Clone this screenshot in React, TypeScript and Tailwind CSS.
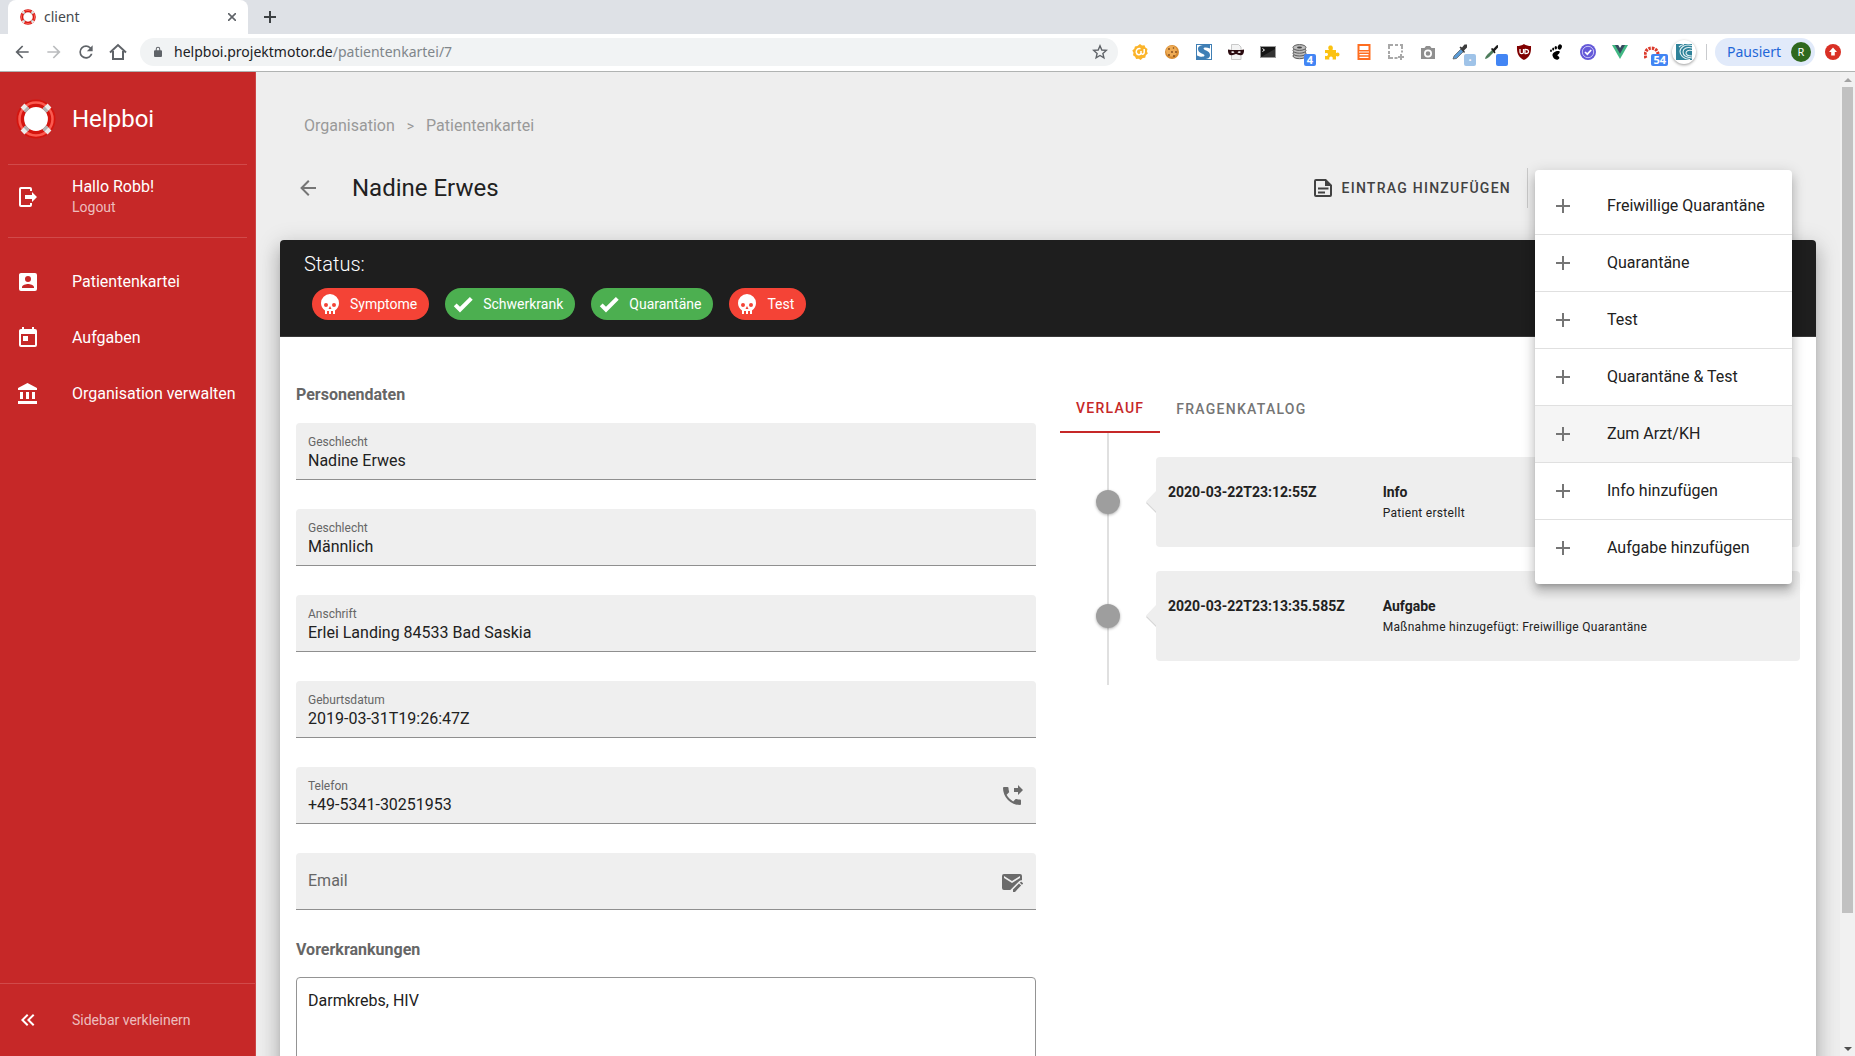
import type { ReactNode } from 'react';

const icons = {
  logout:
    'M16,17V14H9V10H16V7L21,12L16,17M14,2A2,2 0 0,1 16,4V6H14V4H5V20H14V18H16V20A2,2 0 0,1 14,22H5A2,2 0 0,1 3,20V4A2,2 0 0,1 5,2H14Z',
  accountBox:
    'M6,17C6,15 10,13.9 12,13.9C14,13.9 18,15 18,17V18H6M15,9A3,3 0 0,1 12,12A3,3 0 0,1 9,9A3,3 0 0,1 12,6A3,3 0 0,1 15,9M3,5V19A2,2 0 0,0 5,21H19A2,2 0 0,0 21,19V5A2,2 0 0,0 19,3H5C3.89,3 3,3.9 3,5Z',
  calendar:
    'M7,10H12V15H7M19,19H5V8H19M19,3H18V1H16V3H8V1H6V3H5C3.89,3 3,3.9 3,5V19A2,2 0 0,0 5,21H19A2,2 0 0,0 21,19V5A2,2 0 0,0 19,3Z',
  bank: 'M11.5,1L2,6V8H21V6M16,10V17H19V10M2,22H21V19H2M10,10V17H13V10M4,10V17H7V10H4Z',
  collapse:
    'M18.41,7.41L17,6L11,12L17,18L18.41,16.59L13.83,12L18.41,7.41M12.41,7.41L11,6L5,12L11,18L12.41,16.59L7.83,12L12.41,7.41Z',
  back: 'M20,11V13H8L13.5,18.5L12.08,19.92L4.16,12L12.08,4.08L13.5,5.5L8,11H20Z',
  forward: 'M4,11V13H16L10.5,18.5L11.92,19.92L19.84,12L11.92,4.08L10.5,5.5L16,11H4Z',
  plus: 'M19,13H13V19H11V13H5V11H11V5H13V11H19V13Z',
  skull:
    'M12,2A9,9 0 0,0 3,11C3,14.03 4.53,16.82 7,18.47V22H9V19H11V22H13V19H15V22H17V18.46C19.47,16.81 21,14 21,11A9,9 0 0,0 12,2M8,11A2,2 0 0,1 10,13A2,2 0 0,1 8,15A2,2 0 0,1 6,13A2,2 0 0,1 8,11M16,11A2,2 0 0,1 18,13A2,2 0 0,1 16,15A2,2 0 0,1 14,13A2,2 0 0,1 16,11M12,14L13.5,17H10.5L12,14Z',
  check: 'M9,20.42L2.79,14.21L5.62,11.38L9,14.77L18.88,4.88L21.71,7.71L9,20.42Z',
  phone:
    'M18,11L23,6L18,1V4H14V8H18V11M20,15.5C18.75,15.5 17.55,15.3 16.43,14.93C16.08,14.82 15.69,14.9 15.41,15.18L13.21,17.38C10.38,15.94 8.06,13.62 6.62,10.79L8.82,8.59C9.1,8.31 9.18,7.92 9.07,7.57C8.7,6.45 8.5,5.25 8.5,4A1,1 0 0,0 7.5,3H4A1,1 0 0,0 3,4A17,17 0 0,0 20,21A1,1 0 0,0 21,20V16.5A1,1 0 0,0 20,15.5Z',
  mail: 'M4,4H20A2,2 0 0,1 22,6V10.2C21,10 20,10.3 19.3,11L10.3,20H4A2,2 0 0,1 2,18V6A2,2 0 0,1 4,4M4,6V8L12,13L20,8V6L12,11L4,6M13,19.5L19,13.4L21.1,15.5L15,21.9H13V19.5M19.8,12.7L20.7,11.9C21,11.6 21.4,11.6 21.7,11.9L22.8,13C23.1,13.3 23.1,13.7 22.8,14L21.9,14.8L19.8,12.7Z',
  document:
    'M5,3H15L21,9V19A2,2 0 0,1 19,21H5A2,2 0 0,1 3,19V5A2,2 0 0,1 5,3M5,5V19H19V10H14V5H5M7,11.5H17.5V13.5H7V11.5M7,15.5H14V17.5H7V15.5Z',
  reload:
    'M17.65,6.35C16.2,4.9 14.21,4 12,4A8,8 0 0,0 4,12A8,8 0 0,0 12,20C15.73,20 18.84,17.45 19.73,14H17.65C16.83,16.33 14.61,18 12,18A6,6 0 0,1 6,12A6,6 0 0,1 12,6C13.66,6 15.14,6.69 16.22,7.78L13,11H20V4L17.65,6.35Z',
  lock: 'M12,1.5A4.5,4.5 0 0,0 7.5,6V8.5H6A2,2 0 0,0 4,10.5V20A2,2 0 0,0 6,22H18A2,2 0 0,0 20,20V10.5A2,2 0 0,0 18,8.5H16.5V6A4.5,4.5 0 0,0 12,1.5M12,3.5A2.5,2.5 0 0,1 14.5,6V8.5H9.5V6A2.5,2.5 0 0,1 12,3.5Z',
};

function Icon({ d, className = 'size-6' }: { d: string; className?: string }) {
  return (
    <svg viewBox="0 0 24 24" fill="currentColor" fillRule="evenodd" aria-hidden="true" className={`shrink-0 ${className}`}>
      <path d={d} />
    </svg>
  );
}

function Lifebuoy({ className, filled }: { className: string; filled?: boolean }) {
  return (
    <svg viewBox="0 0 40 40" aria-hidden="true" className={`shrink-0 ${className}`}>
      {filled && <circle cx="20" cy="20" r="12.500" fill="#fff" />}
      <circle cx="20" cy="20" r="15.700" fill="none" stroke="#d5150f" strokeWidth="7.600" />
      <circle cx="20" cy="20" r="16.500" fill="none" stroke="#fb5a50" strokeWidth="2.500" />
      <path d="M6.500 6.500l4.500 4.500M33.500 6.500l-4.500 4.500M6.500 33.500l4.500-4.500M33.500 33.500l-4.500-4.500" stroke="#ececec" strokeWidth="5.500" />
      <path d="M9.500 9.500l2.200 2.200M30.500 9.500l-2.200 2.200M9.500 30.500l2.200-2.200M30.500 30.500l-2.200-2.200" stroke="#b4b4b4" strokeWidth="5.500" />
    </svg>
  );
}

function Ext({ label, badge, badgeClass = '', children }: { label: string; badge?: string; badgeClass?: string; children: ReactNode }) {
  return (
    <button type="button" aria-label={label} className="relative flex h-7 w-8 shrink-0 items-center justify-center">
      <svg viewBox="0 0 16 16" aria-hidden="true" className="size-4">
        {children}
      </svg>
      {badge !== undefined && (
        <span className={`absolute right-0 bottom-0 flex h-3 min-w-3 items-center justify-center rounded-xs px-0.5 text-[11px] leading-3 font-bold text-white ${badgeClass}`}>
          {badge}
        </span>
      )}
    </button>
  );
}

function Extensions() {
  return (
    <div className="flex shrink-0 items-center pl-1.5">
      <Ext label="Kalender">
        <path d="M8 0l2 1.400 2.500-.2.900 2.300 2.100 1.400-.6 2.400.9 2.300-2 1.600-.6 2.500-2.500.3L8.700 16l-2.100-1.200-2.500.2-1-2.300L1 11.300l.5-2.500L.3 6.500l2-1.700.6-2.400 2.500-.3z" fill="#fbb42a" />
        <path d="M8.500 4.700C5.500 4 3.900 6.300 4.300 8.500c.5 2.700 4.200 3 4.700.3V7M9 9c.8 2 3.200 1.300 3.200-.7V5" fill="none" stroke="#fff" strokeWidth="1.500" />
      </Ext>
      <Ext label="Cookies">
        <circle cx="8" cy="8" r="7" fill="#d68a2f" />
        <circle cx="7.500" cy="7" r="5.500" fill="#eeab55" />
        <g fill="#7d4718">
          <circle cx="5" cy="5" r=".9" /><circle cx="9.500" cy="4" r=".8" /><circle cx="8" cy="8" r=".9" /><circle cx="12" cy="8" r=".9" /><circle cx="5" cy="11" r=".9" /><circle cx="10" cy="12" r=".9" />
        </g>
      </Ext>
      <Ext label="Stylish">
        <path d="M0 0h16v16H0z" fill="#3f7fb5" />
        <path d="M1 1h14v14H1z" fill="#fff" />
        <path d="M14 1v3.500C11 3 7.500 3 7.500 4.500 7.500 6.300 14 6.500 14 11c0 3-2.500 4-5 4H1v-3.500c3.500 1.700 7.500 1.500 7.500 0C8.500 9.500 2 9.500 2 5c0-3 3-4 6-4z" fill="#3f7fb5" />
      </Ext>
      <Ext label="Inkognito">
        <path d="M3.500.5h7l2.500 2.500v12.500h-9.500z" fill="#f3f3f3" stroke="#c9c9c9" />
        <path d="M0 5.500c3 .8 13 .8 16 0 .2 3-.6 5.800-3.500 5.800-2 0-3.200-1.300-4.500-1.300s-2.500 1.300-4.500 1.300C.6 11.300-.2 8.500 0 5.500z" fill="#2b0c10" />
        <path d="M3 8c1-1 2.500-1 3.500.3C5.500 9.300 4 9.300 3 8zM9.500 8.300C10.500 7 12 7 13 8c-1 1.300-2.500 1.300-3.500.3z" fill="#fff" />
      </Ext>
      <Ext label="Terminal">
        <path d="M0 2h16v12H0z" fill="#9b9b9b" />
        <path d="M1 3h14v10H1z" fill="#151515" />
        <path d="M1 13L15 5v8z" fill="#333" />
        <path d="M2.500 4.500l2 1.500-2 1.500" fill="none" stroke="#fff" />
      </Ext>
      <Ext label="Datenbank" badge="4" badgeClass="bg-[#4285f4]">
        <g fill="#bdbdbd" stroke="#5b5b5b">
          <ellipse cx="7.500" cy="12" rx="6.500" ry="2.700" /><ellipse cx="7.500" cy="9.300" rx="6.500" ry="2.700" /><ellipse cx="7.500" cy="6.500" rx="6.500" ry="2.700" /><ellipse cx="7.500" cy="3.500" rx="6.500" ry="2.900" />
        </g>
        <ellipse cx="7.500" cy="3.500" rx="2.500" ry="1" fill="#444" />
      </Ext>
      <Ext label="Erweiterung">
        <path d="M1 6h4C3.500 3.500 4.500 1.500 6.500 1.500S9.500 3.500 8.500 6H12v3c2-1.200 3.500-.2 3.500 1.500S14 13 12 12v3.500H8.500c.8-2-.2-3-1.500-3s-2.300 1-1.500 3H1v-3.800c2 .6 3-.2 3-1.300S3 8.500 1 9.300z" fill="#fbc211" />
      </Ext>
      <Ext label="Rechner">
        <path d="M1.500 0h13v16h-13z" fill="#ff6d1f" />
        <path d="M3.500 2h9v4h-9zM3 7.500h10v1H3zM3.500 10h9v1.300h-9zM3.500 12.800h9v1.200h-9z" fill="#fff" />
      </Ext>
      <Ext label="Ausschnitt">
        <path d="M1 5V1h4M7 1h3M12 1h2v4M1 7v3M1 11v3h4M6.500 14h3M14 6.500v2M13 10v6M10 13h6" fill="none" stroke="#a8a8a8" strokeWidth="2" />
      </Ext>
      <Ext label="Kamera">
        <path d="M1 4h3.500L6 2h4l1.500 2H15v11H1zM8 5.500a4 4 0 1 0 0 8 4 4 0 0 0 0-8m0 1.700a2.300 2.300 0 1 1 0 4.600 2.300 2.300 0 0 1 0-4.600" fill="#8f8f8f" fillRule="evenodd" />
      </Ext>
      <Ext label="Farbwähler" badge="·" badgeClass="bg-[#9fc3e8]">
        <path d="M1 15l1-3 7-7 2.500 2.500-7 7z" fill="#5b9bd5" stroke="#555" strokeWidth=".7" />
        <path d="M7.500 3.500l1-1 1.500 1L12.500.5h2.500V3.500L12 6.500l1 1.500-1 1z" fill="#3c3c3c" />
      </Ext>
      <Ext label="Pipette" badge="" badgeClass="bg-[#4285f4]">
        <path d="M1 15c.5-3 2-4 4-6l3-3 2 2-3 3c-2 2-3 3.500-6 4z" fill="#4e7d5c" />
        <path d="M7 5l1-1 1.500.7L12.500 1.500 14 1v2.500L10.800 7l.7 1.500-1 1z" fill="#1c1c1c" />
      </Ext>
      <Ext label="uBlock">
        <path d="M8 0c2 1.500 4.500 2 7 2 .3 7-1 11-7 14C2 13 .7 9 1 2c2.500 0 5-.5 7-2z" fill="#800000" />
        <path d="M4 5v3.200q0 1.500 1.700 1.500T7.500 8.200V5M9 5.500v4q3.500.3 3.500-2T9 5.500z" fill="none" stroke="#fff" strokeWidth="1.300" />
      </Ext>
      <Ext label="Gnome">
        <ellipse cx="11.800" cy="3" rx="2" ry="2.700" transform="rotate(20 11.800 3)" />
        <ellipse cx="7.800" cy="3.700" rx="1.200" ry="1.700" /><ellipse cx="5.200" cy="5" rx="1" ry="1.500" /><ellipse cx="3" cy="6.800" rx=".9" ry="1.300" />
        <path d="M11 7c-3-.5-7 1.500-6.500 4.500.4 2.500 3 5 5.500 4 2-.8 1.500-2.700.3-3.300-1-.5-1.200-.9-.3-1.700C11.500 9.500 12.500 7.400 11 7z" />
      </Ext>
      <Ext label="Prüfung">
        <circle cx="8" cy="8" r="8" fill="#6459d8" />
        <circle cx="8" cy="8" r="5.700" fill="none" stroke="#c9c5f7" />
        <path d="M5 8l2.300 2.200L11.200 6" fill="none" stroke="#fff" strokeWidth="1.700" />
      </Ext>
      <Ext label="Vue">
        <path d="M0 1h16L8 15z" fill="#41b883" />
        <path d="M3 1h10L8 9.800z" fill="#35495e" />
        <path d="M6.200 1h3.600L8 4z" fill="#fff" />
      </Ext>
      <Ext label="Tacho" badge="54" badgeClass="bg-[#4285f4]">
        <path d="M2 14a6.500 6.500 0 1 1 12-4" fill="none" stroke="#db3a2b" strokeWidth="3.200" strokeDasharray="2.500 1" />
      </Ext>
      <button type="button" aria-label="Wellen" className="flex h-7 w-8 shrink-0 items-center justify-center">
        <span className="flex size-6 items-center justify-center rounded-full bg-white shadow-[0_1px_3px_rgba(0,0,0,0.4)]">
          <svg viewBox="0 0 16 16" aria-hidden="true" className="size-4">
            <path d="M0 0h16v16H0z" fill="#2f8299" />
            <path d="M16 1.500C8-.5 4 4 4 7.500S7 15 14 15.500M16 4C10.500 2.500 7 5 7 8s3 5.500 9 6M16 6.500c-4-.8-6 .5-6 2.500s2 3 6 3M3 3C5 1 6.500.8 8 .5" fill="none" stroke="#e6f2f4" strokeWidth="1.100" />
          </svg>
        </span>
      </button>
    </div>
  );
}

function BrowserChrome() {
  return (
    <header className="shrink-0 font-['Noto_Sans',sans-serif]">
      <div className="flex h-[34px] items-end bg-[#dee1e6] px-2">
        <div className="flex h-full w-60 items-center rounded-t-lg bg-white pr-2 pl-3">
          <Lifebuoy className="size-4" />
          <span className="ml-2 flex-1 text-sm text-[#45494d]">client</span>
          <button type="button" aria-label="Tab schließen" className="flex size-4 items-center justify-center text-[#5f6368]">
            <svg viewBox="0 0 8 8" aria-hidden="true" className="size-2">
              <path d="M0 0l8 8M8 0L0 8" stroke="currentColor" strokeWidth="1.600" />
            </svg>
          </button>
        </div>
        <button type="button" aria-label="Neuer Tab" className="ml-3 flex h-full w-5 items-center justify-center text-[#3c4043]">
          <svg viewBox="0 0 12 12" aria-hidden="true" className="size-3">
            <path d="M6 0v12M0 6h12" stroke="currentColor" strokeWidth="2" />
          </svg>
        </button>
      </div>
      <div className="flex h-[38px] items-center border-b border-[#b0b3b2] bg-white pr-3.5 pb-px">
        <nav aria-label="Browser" className="flex items-center gap-3 pr-3 pl-3 text-[#5f6368]">
          <button type="button" aria-label="Zurück"><Icon d={icons.back} className="size-5" /></button>
          <button type="button" aria-label="Vorwärts" className="text-[#babcbe]"><Icon d={icons.forward} className="size-5" /></button>
          <button type="button" aria-label="Neu laden"><Icon d={icons.reload} className="size-5" /></button>
          <button type="button" aria-label="Startseite">
            <svg viewBox="0 0 20 20" fill="none" stroke="currentColor" strokeWidth="2" aria-hidden="true" className="size-5">
              <path d="M2 10.500L10 3l8 7.500M5 9v8h10V9" />
            </svg>
          </button>
        </nav>
        <div className="flex h-7 min-w-0 flex-1 items-center rounded-full bg-[#f1f3f4] pr-2.5 pl-3 text-sm">
          <Icon d={icons.lock} className="size-3 text-[#5f6368]" />
          <p className="ml-2.5 flex-1 text-[#202124]">
            helpboi.projektmotor.de<span className="text-[#80868b]">/patientenkartei/7</span>
          </p>
          <button type="button" aria-label="Lesezeichen" className="text-[#5f6368]">
            <svg viewBox="0 0 16 16" fill="none" stroke="currentColor" strokeWidth="1.400" aria-hidden="true" className="size-4">
              <path d="M8 1.800l1.800 4.200 4.500.4-3.400 3 1 4.400L8 11.500l-3.900 2.300 1-4.400-3.400-3 4.500-.4z" />
            </svg>
          </button>
        </div>
        <Extensions />
        <div className="mr-2 ml-1.5 h-4 w-px shrink-0 bg-[#c9cbce]" />
        <button type="button" className="flex h-7 shrink-0 items-center gap-2.5 rounded-full bg-[#e1eafa] pr-1 pl-3 text-sm text-[#1f67d8]">
          Pausiert
          <span className="flex size-5 items-center justify-center rounded-full bg-[#2f691e] text-[11px] text-white">R</span>
        </button>
        <button type="button" aria-label="Aktualisieren" className="ml-2.5 shrink-0">
          <svg viewBox="0 0 16 16" aria-hidden="true" className="size-4">
            <circle cx="8" cy="8" r="8" fill="#d93025" />
            <path d="M8 3.500L12 8H9.800v3.500H6.200V8H4z" fill="#fff" />
          </svg>
        </button>
      </div>
    </header>
  );
}

const navItems = [
  { label: 'Patientenkartei', icon: icons.accountBox },
  { label: 'Aufgaben', icon: icons.calendar },
  { label: 'Organisation verwalten', icon: icons.bank },
];

function Sidebar() {
  return (
    <aside className="flex w-64 shrink-0 flex-col border-r border-[#cd4545] bg-[#c62828] text-white">
      <div className="flex h-[92px] items-center gap-4 pt-0.5 pl-4">
        <Lifebuoy className="size-10" filled />
        <span className="text-2xl">Helpboi</span>
      </div>
      <div className="mx-2 border-y border-[#d14a4a] pb-2">
        <button type="button" className="flex h-16 w-full items-center gap-8 pl-2 text-left">
          <Icon d={icons.logout} />
          <span>
            <span className="block text-base leading-5">Hallo Robb!</span>
            <span className="block text-sm leading-5 text-white/70">Logout</span>
          </span>
        </button>
      </div>
      <nav aria-label="Hauptmenü" className="flex flex-1 flex-col gap-2 pt-5">
        {navItems.map((item) => (
          <a key={item.label} href="#" className="flex h-12 items-center gap-8 pl-4 text-base whitespace-nowrap">
            <Icon d={item.icon} />
            {item.label}
          </a>
        ))}
      </nav>
      <button type="button" className="flex h-[73px] items-center gap-8 border-t border-[#d14a4a] pl-4 text-sm">
        <Icon d={icons.collapse} />
        <span className="text-white/70">Sidebar verkleinern</span>
      </button>
    </aside>
  );
}

const menuItems = ['Freiwillige Quarantäne', 'Quarantäne', 'Test', 'Quarantäne & Test', 'Zum Arzt/KH', 'Info hinzufügen', 'Aufgabe hinzufügen'];

function ActionMenu() {
  return (
    <ul
      role="menu"
      className="absolute top-[98px] right-12 z-10 w-[257px] divide-y divide-[#e0e0e0] rounded bg-white py-2 shadow-[0_5px_5px_-3px_rgba(0,0,0,0.2),0_8px_10px_1px_rgba(0,0,0,0.14),0_3px_14px_2px_rgba(0,0,0,0.12)]"
    >
      {menuItems.map((item) => (
        <li key={item} role="none" className={item === 'Zum Arzt/KH' ? 'bg-[#f5f5f5]' : ''}>
          <button type="button" role="menuitem" className="flex h-14 w-full items-center gap-8 pl-4 text-base whitespace-nowrap text-[#212121]">
            <Icon d={icons.plus} className="size-6 text-[#757575]" />
            {item}
          </button>
        </li>
      ))}
    </ul>
  );
}

const chips = [
  { label: 'Symptome', ok: false },
  { label: 'Schwerkrank', ok: true },
  { label: 'Quarantäne', ok: true },
  { label: 'Test', ok: false },
];

const fields = [
  { id: 'name', label: 'Geschlecht', value: 'Nadine Erwes' },
  { id: 'geschlecht', label: 'Geschlecht', value: 'Männlich' },
  { id: 'anschrift', label: 'Anschrift', value: 'Erlei Landing 84533 Bad Saskia' },
  { id: 'geburtsdatum', label: 'Geburtsdatum', value: '2019-03-31T19:26:47Z' },
  { id: 'telefon', label: 'Telefon', value: '+49-5341-30251953', icon: icons.phone },
];

function PersonForm() {
  return (
    <form className="text-[#212121]">
      <h2 className="mb-4 text-base leading-6 font-bold text-[#666]">Personendaten</h2>
      <div className="flex flex-col gap-[29px]">
        {fields.map((f) => (
          <div key={f.id} className="flex h-[57px] items-center rounded-t border-b border-[#8f8f8f] bg-[#efefef] px-3">
            <div className="flex-1 pt-1">
              <label htmlFor={f.id} className="block text-xs leading-4 text-[#666]">{f.label}</label>
              <input id={f.id} defaultValue={f.value} className="block h-[22px] w-full bg-transparent text-base outline-none" />
            </div>
            {f.icon && (
              <button type="button" aria-label="Anrufen" className="pt-0.5 text-[#6b6b6b]"><Icon d={f.icon} /></button>
            )}
          </div>
        ))}
        <div className="flex h-[57px] items-center rounded-t border-b border-[#8f8f8f] bg-[#efefef] px-3">
          <input aria-label="Email" placeholder="Email" className="h-6 flex-1 bg-transparent text-base outline-none placeholder:text-[#666]" />
          <button type="button" aria-label="Email schreiben" className="pt-0.5 text-[#6b6b6b]"><Icon d={icons.mail} /></button>
        </div>
      </div>
      <label htmlFor="vorerkrankungen" className="mt-7 mb-[15px] block text-base leading-6 font-bold text-[#666]">Vorerkrankungen</label>
      <textarea
        id="vorerkrankungen"
        rows={6}
        defaultValue="Darmkrebs, HIV"
        className="block w-full resize-none rounded border border-[#949494] p-[11px] text-base outline-none"
      />
    </form>
  );
}

const events = [
  { date: '2020-03-22T23:12:55Z', title: 'Info', text: 'Patient erstellt' },
  { date: '2020-03-22T23:13:35.585Z', title: 'Aufgabe', text: 'Maßnahme hinzugefügt: Freiwillige Quarantäne' },
];

function History() {
  return (
    <section>
      <div role="tablist" className="flex text-sm font-medium tracking-[0.09em]">
        <button type="button" role="tab" aria-selected="true" className="h-12 border-b-2 border-[#c62828] px-4 text-[#c62828]">VERLAUF</button>
        <button type="button" role="tab" aria-selected="false" className="h-12 px-4 text-[#757575]">FRAGENKATALOG</button>
      </div>
      <ol className="relative flex flex-col gap-6 py-6 text-[#212121]">
        <li aria-hidden="true" className="absolute inset-y-0 left-[47px] w-0.5 bg-[#e0e0e0]" />
        {events.map((e) => (
          <li key={e.date} className="flex items-center">
            <span className="relative flex w-24 shrink-0 justify-center">
              <span className="size-6 rounded-full bg-[#9e9e9e] shadow-[0_1px_3px_rgba(0,0,0,0.3)]" />
              <svg viewBox="0 0 10 22" aria-hidden="true" className="absolute top-px right-0 h-[22px] w-2.5">
                <path d="M10 1L0 12l10 10z" fill="#d5d5d5" />
                <path d="M10 0L0 10.500l10 10z" fill="#eee" />
              </svg>
            </span>
            <div className="grid h-[90px] flex-1 grid-cols-3 rounded bg-[#eee] pt-6">
              <time className="px-3 text-sm leading-[22px] font-bold">{e.date}</time>
              <div className="col-span-2 px-3">
                <p className="text-sm leading-[22px] font-bold">{e.title}</p>
                <p className="text-xs leading-5 tracking-wide">{e.text}</p>
              </div>
            </div>
          </li>
        ))}
      </ol>
    </section>
  );
}

function Patient() {
  return (
    <main className="min-w-0 flex-1 overflow-hidden bg-[#eee] px-6">
      <nav aria-label="Brotkrumen" className="flex items-center gap-3 px-6 pt-[42px] text-base leading-6 text-[#999]">
        <a href="#">Organisation</a>
        <span className="text-sm leading-6">&gt;</span>
        <a href="#">Patientenkartei</a>
      </nav>
      <div className="mt-[30px] flex h-10 items-center pr-72 pl-4">
        <button type="button" aria-label="Zurück" className="text-[#757575]"><Icon d={icons.back} /></button>
        <h1 className="ml-8 flex-1 text-2xl text-[#212121]">Nadine Erwes</h1>
        <button type="button" className="flex items-center gap-1.5 text-sm font-medium tracking-[0.09em] text-[#424242]">
          <Icon d={icons.document} />
          EINTRAG HINZUFÜGEN
        </button>
        <div className="ml-4 h-10 w-px bg-[#c9c9c9]" />
      </div>
      <article className="mt-8 rounded bg-white shadow-[0_7px_8px_-4px_rgba(0,0,0,0.2),0_12px_17px_2px_rgba(0,0,0,0.14),0_5px_22px_4px_rgba(0,0,0,0.12)]">
        <div className="h-[97px] rounded-t border-b border-[#383838] bg-[#1e1e1e] px-6 pt-2 text-white">
          <h2 className="text-xl leading-8 font-light">Status:</h2>
          <ul className="mt-2 flex gap-4 pl-2">
            {chips.map((c) => (
              <li key={c.label} className={`flex h-8 items-center gap-2 rounded-full pr-3 pl-1.5 text-sm ${c.ok ? 'bg-[#4caf50]' : 'bg-[#f44336]'}`}>
                <Icon d={c.ok ? icons.check : icons.skull} />
                {c.label}
              </li>
            ))}
          </ul>
        </div>
        <div className="grid grid-cols-2 gap-6 px-4 pt-[46px] pb-8">
          <PersonForm />
          <div className="pt-0.5"><History /></div>
        </div>
      </article>
    </main>
  );
}

function Scrollbar() {
  return (
    <div aria-hidden="true" className="flex w-[15px] shrink-0 flex-col items-center bg-[#f1f1f1]">
      <div className="flex h-[15px] items-center">
        <div className="border-x-4 border-b-4 border-x-transparent border-b-[#a3a3a3]" />
      </div>
      <div className="w-[11px] flex-[826] bg-[#c1c1c1]" />
      <div className="flex-[128]" />
      <div className="flex h-[15px] items-center">
        <div className="border-x-4 border-t-4 border-x-transparent border-t-[#505050]" />
      </div>
    </div>
  );
}

export default function App() {
  return (
    <div className="relative flex h-screen flex-col overflow-hidden font-[Roboto,sans-serif]">
      <BrowserChrome />
      <div className="relative flex min-h-0 flex-1">
        <Sidebar />
        <Patient />
        <Scrollbar />
        <div className="absolute top-0 right-[15px]"><ActionMenu /></div>
      </div>
    </div>
  );
}
